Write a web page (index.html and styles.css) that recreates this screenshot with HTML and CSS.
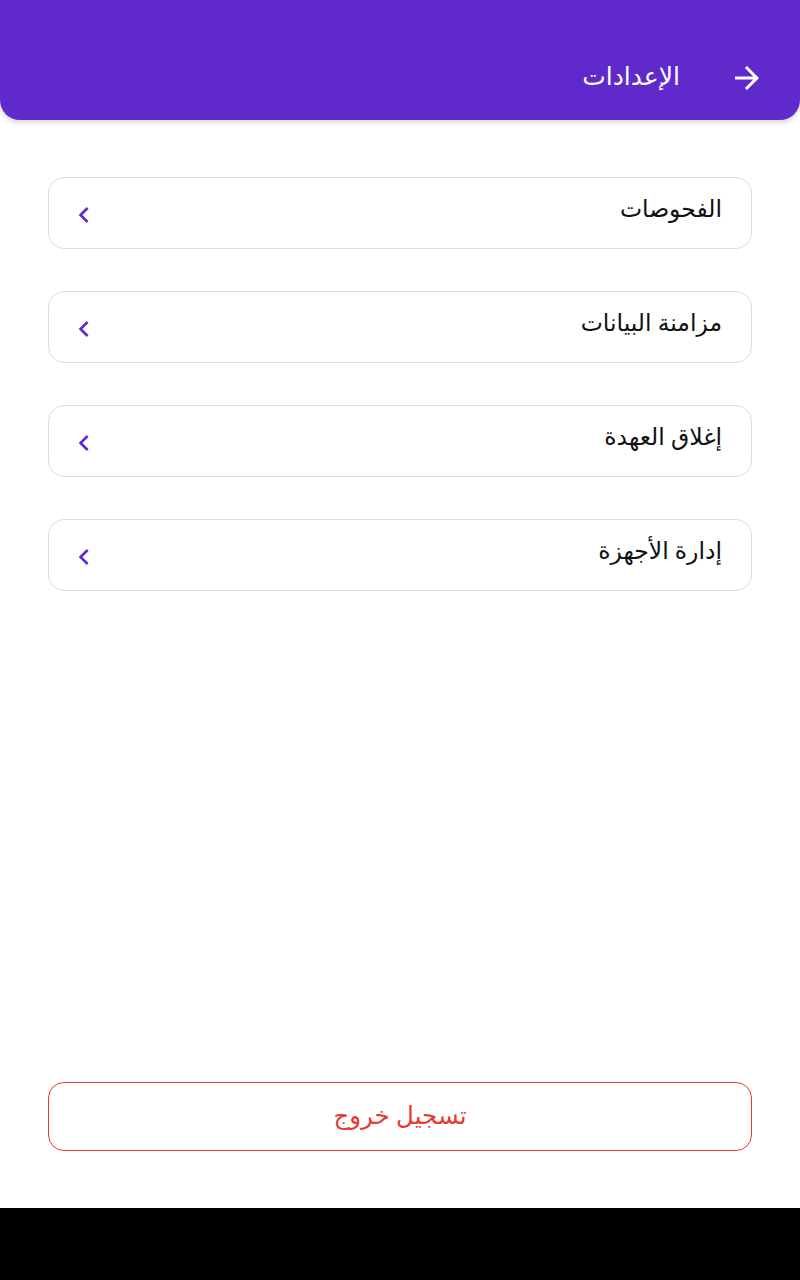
FILE: index.html
```html
<!DOCTYPE html>
<html lang="ar" dir="rtl">
<head>
    <meta charset="UTF-8">
    <meta name="viewport" content="width=device-width, initial-scale=1.0">
    <title>الإعدادات</title>
    <link rel="stylesheet" href="styles.css">
</head>
<body>
    <div class="screen">
        <header class="app-bar">
            <button class="back-button" aria-label="رجوع">
                <svg width="36" height="36" viewBox="0 0 24 24" fill="#fff">
                    <path d="M12 4l-1.41 1.41L16.17 11H4v2h12.17l-5.58 5.59L12 20l8-8z"/>
                </svg>
            </button>
            <h1>الإعدادات</h1>
        </header>

        <main class="settings-list">
            <a href="#" class="settings-item">
                <span>الفحوصات</span>
                <svg class="chevron" width="32" height="32" viewBox="0 0 24 24" fill="#5f29cc"><path d="M15.41 7.41L14 6l-6 6 6 6 1.41-1.41L10.83 12z"/></svg>
            </a>
            <a href="#" class="settings-item">
                <span>مزامنة البيانات</span>
                <svg class="chevron" width="32" height="32" viewBox="0 0 24 24" fill="#5f29cc"><path d="M15.41 7.41L14 6l-6 6 6 6 1.41-1.41L10.83 12z"/></svg>
            </a>
            <a href="#" class="settings-item">
                <span>إغلاق العهدة</span>
                <svg class="chevron" width="32" height="32" viewBox="0 0 24 24" fill="#5f29cc"><path d="M15.41 7.41L14 6l-6 6 6 6 1.41-1.41L10.83 12z"/></svg>
            </a>
            <a href="#" class="settings-item">
                <span>إدارة الأجهزة</span>
                <svg class="chevron" width="32" height="32" viewBox="0 0 24 24" fill="#5f29cc"><path d="M15.41 7.41L14 6l-6 6 6 6 1.41-1.41L10.83 12z"/></svg>
            </a>
        </main>

        <div class="logout-wrap">
            <button class="logout-button">تسجيل خروج</button>
        </div>
    </div>

    <!-- system navigation bar -->
    <div class="nav-bar"></div>
</body>
</html>
```

FILE: styles.css
```css
body {
    font-family: "Noto Sans", "DejaVu Sans", sans-serif;
    background-color: #fff;
    margin: 0;
    padding: 0;
}

.screen {
    height: 1208px;
    display: flex;
    flex-direction: column;
}

.app-bar {
    height: 120px;
    box-sizing: border-box;
    background-color: #5f29cc;
    border-radius: 0 0 20px 20px;
    box-shadow: 0 3px 5px rgba(0, 0, 0, 0.15);
    display: flex;
    align-items: center;
    padding: 36px 35px 0 0;
    gap: 49px;
}

.app-bar h1 {
    margin: 0 0 6px;
    color: #fff;
    font-size: 25px;
    font-weight: normal;
}

.back-button {
    background: none;
    border: none;
    padding: 0;
    display: flex;
}

.settings-list {
    display: flex;
    flex-direction: column;
    gap: 42px;
    padding: 57px 48px 0;
}

.settings-item {
    height: 72px;
    box-sizing: border-box;
    border: 1px solid #dcdce0;
    border-radius: 16px;
    display: flex;
    align-items: center;
    justify-content: space-between;
    padding: 0 29px 0 19px;
    color: #111;
    text-decoration: none;
    font-size: 23.5px;
}

.settings-item span {
    margin-top: -10px;
}

.chevron {
    margin-top: 3px;
}

.logout-wrap {
    margin-top: auto;
    padding: 0 48px 57px;
}

.logout-button {
    width: 100%;
    height: 69px;
    padding-bottom: 6px;
    background: #fff;
    border: 1px solid #e53935;
    border-radius: 16px;
    color: #e53935;
    font-family: inherit;
    font-size: 24.5px;
}

.nav-bar {
    height: 72px;
    background-color: #000;
}
```
